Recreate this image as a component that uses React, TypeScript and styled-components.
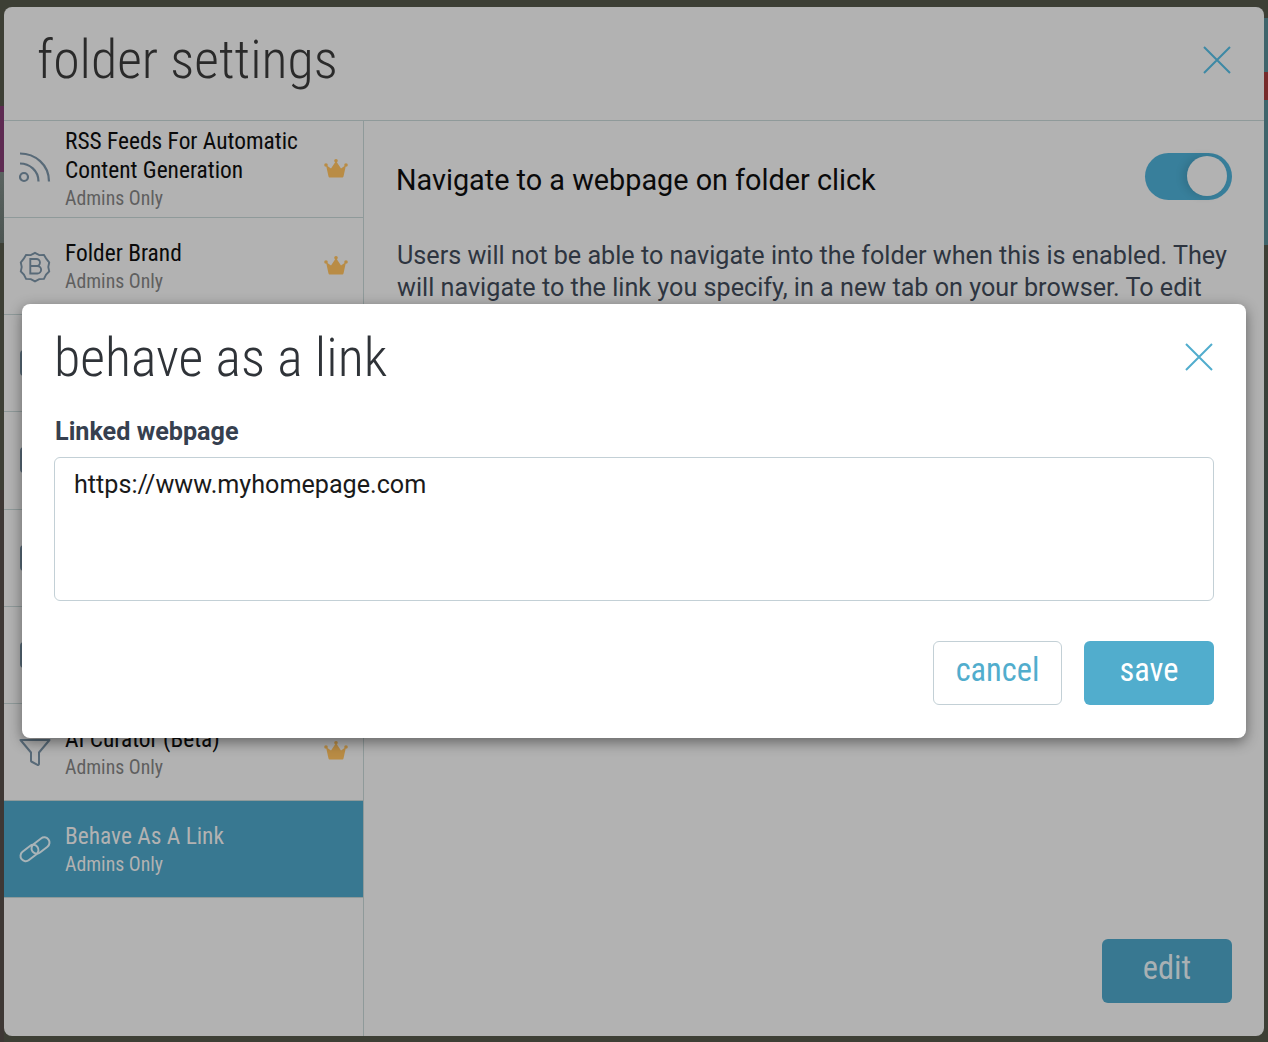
import React from "react";
import styled, { createGlobalStyle } from "styled-components";

const GlobalStyle = createGlobalStyle`
    html, body {
        margin: 0;
        padding: 0;
        background: #3d3f35;
    }
    * {
        box-sizing: border-box;
    }
`;

const condensed = `"Roboto Condensed", Roboto, "Liberation Sans", sans-serif`;

const Page = styled.div`
    position: relative;
    width: 1268px;
    height: 1042px;
    padding: 7px 4px 6px;
    overflow: hidden;
    background:
        linear-gradient(to bottom, #3d3f35 0, #3d3f35 106px, #5e2a52 106px, #5e2a52 172px, #5a6360 172px, #4c5552 243px, #3d3f35 243px, #3d3f35 490px, #3e3835 490px, #3e3835 1042px) left top / 4px 100% no-repeat,
        linear-gradient(to bottom, #3d3f35 0, #3d3f35 18px, #3f646b 18px, #3f646b 72px, #762a2a 72px, #762a2a 100px, #3f646b 100px, #3f646b 245px, #3d3f35 245px, #334340 600px, #3d3f35 1042px) right top / 4px 100% no-repeat,
        #3d3f35;
`;

const Panel = styled.div`
    display: flex;
    flex-direction: column;
    height: 100%;
    background: #b2b2b2;
    border-radius: 8px;
    overflow: hidden;
`;

const Header = styled.header`
    flex: 0 0 114px;
    display: flex;
    align-items: center;
    justify-content: space-between;
    padding: 0 33px 7px 33px;
    border-bottom: 1px solid #8f9a9a;
`;

const Title = styled.h1`
    margin: 0;
    font-family: ${condensed};
    font-stretch: condensed;
    font-weight: 300;
    font-size: 53.8px;
    line-height: 1;
    color: #2a2a2a;
`;

const CloseButton = styled.button<{ $color: string }>`
    width: 28px;
    height: 28px;
    padding: 0;
    border: 0;
    background: none;
    color: ${(p) => p.$color};
    svg {
        display: block;
    }
`;

const Body = styled.div`
    flex: 1;
    display: flex;
    min-height: 0;
`;

const Sidebar = styled.nav`
    flex: 0 0 360px;
    border-right: 1px solid #8f9a9a;
`;

const Row = styled.div<{ $active?: boolean }>`
    height: 97.15px;
    display: flex;
    align-items: center;
    padding: 0 15px;
    border-bottom: 1px solid #8f9a9a;
    background: ${(p) => (p.$active ? "#387891" : "transparent")};
`;

const RowIcon = styled.div<{ $active?: boolean }>`
    flex: 0 0 32px;
    height: 32px;
    margin-right: 14px;
    color: ${(p) => (p.$active ? "#a9b4b8" : "#586a78")};
    svg {
        display: block;
        overflow: visible;
    }
`;

const HiddenIcon = styled.div`
    width: 16px;
    height: 26px;
    margin: 3px 0 0 1px;
    border: 2px solid #586a78;
    border-radius: 4px;
`;

const RowText = styled.div`
    flex: 1;
    min-width: 0;
    padding-top: 2px;
    ${Row}:first-child & {
        padding-top: 0;
    }
`;

const RowTitle = styled.div<{ $active?: boolean }>`
    font-family: ${condensed};
    font-stretch: condensed;
    font-size: 23.4px;
    line-height: 29px;
    color: ${(p) => (p.$active ? "#b2b2b2" : "#0a0a0a")};
`;

const RowSub = styled.div<{ $active?: boolean }>`
    font-family: ${condensed};
    font-stretch: condensed;
    font-size: 19.8px;
    line-height: 27px;
    color: ${(p) => (p.$active ? "#b2b2b2" : "#5f5f5f")};
`;

const Crown = styled.svg`
    flex: 0 0 24px;
    color: #b98c45;
    margin-bottom: 2px;
`;

const Content = styled.main`
    flex: 1;
    display: flex;
    flex-direction: column;
    padding: 31px 32px 33px 33px;
`;

const SettingRow = styled.div`
    display: flex;
    align-items: center;
    justify-content: space-between;
    height: 48px;
    margin-bottom: 40px;
`;

const SettingLabel = styled.div`
    padding-top: 7px;
    margin-left: -1px;
    font-family: Roboto, "Liberation Sans", sans-serif;
    font-size: 28.8px;
    color: #0a0a0a;
`;

const Toggle = styled.div`
    position: relative;
    width: 87px;
    height: 47px;
    border-radius: 24px;
    background: #387f9b;
    &::after {
        content: "";
        position: absolute;
        top: 3px;
        right: 5px;
        width: 40px;
        height: 40px;
        border-radius: 50%;
        background: #b2b2b2;
        box-shadow: -4px 0 8px rgba(0, 0, 0, 0.12);
    }
`;

const Description = styled.p`
    margin: 0;
    font-family: Roboto, "Liberation Sans", sans-serif;
    font-size: 25.18px;
    line-height: 32px;
    color: #2e3540;
`;

const Footer = styled.div`
    margin-top: auto;
    display: flex;
    justify-content: flex-end;
`;

const Button = styled.button<{ $variant: "dim" | "primary" | "outline" }>`
    width: ${(p) => (p.$variant === "outline" ? "129px" : "130px")};
    height: 64px;
    padding: 0 0 7px;
    border-radius: 6px;
    border: ${(p) => (p.$variant === "outline" ? "1px solid #c3d0d6" : "0")};
    font-family: ${condensed};
    font-stretch: condensed;
    font-size: 32.4px;
    background: ${(p) =>
        p.$variant === "dim" ? "#387891" : p.$variant === "primary" ? "#51adcd" : "#fff"};
    color: ${(p) =>
        p.$variant === "dim" ? "#a9b1b4" : p.$variant === "primary" ? "#fff" : "#51adcd"};
`;

const Modal = styled.section`
    position: absolute;
    left: 22px;
    top: 304px;
    width: 1224px;
    height: 434px;
    padding: 0 33px 33px 33px;
    display: flex;
    flex-direction: column;
    background: #fff;
    border-radius: 8px;
    box-shadow: 0 4px 14px rgba(0, 0, 0, 0.45);
`;

const ModalHeader = styled.div`
    height: 106px;
    display: flex;
    align-items: center;
    justify-content: space-between;
`;

const ModalTitle = styled.h2`
    margin: 2px 0 0 -1px;
    font-family: ${condensed};
    font-stretch: condensed;
    font-weight: 300;
    font-size: 54px;
    line-height: 1;
    color: #2f3338;
`;

const FieldLabel = styled.label`
    display: block;
    margin-top: 3px;
    margin-bottom: 6px;
    font-family: Roboto, "Liberation Sans", sans-serif;
    font-weight: 700;
    font-size: 25.2px;
    line-height: 38px;
    color: #36404f;
`;

const UrlField = styled.div`
    height: 144px;
    margin: 0 -1px;
    padding: 9px 19px;
    border: 1px solid #c3d0d6;
    border-radius: 6px;
    font-family: Roboto, "Liberation Sans", sans-serif;
    font-size: 25.15px;
    line-height: 36px;
    color: #1a1a1a;
`;

const Actions = styled.div`
    margin-top: auto;
    margin-right: -1px;
    display: flex;
    justify-content: flex-end;
    gap: 22px;
`;

const CloseIcon = () => (
    <svg width="28" height="28" viewBox="0 0 28 28" fill="none" stroke="currentColor" strokeWidth="2">
        <path d="M1 1l26 26M27 1L1 27" />
    </svg>
);

const RssIcon = () => (
    <svg width="32" height="32" viewBox="0 2 32 32" fill="none" stroke="currentColor" strokeWidth="2.2">
        <circle cx="5" cy="26" r="4" />
        <path d="M1 12.500c9.500 0 18.500 7 18.500 18" />
        <path d="M1 2.500c15 0 29 11 29 28" />
    </svg>
);

const BrandIcon = () => (
    <svg width="32" height="32" viewBox="-1 -1 34 34" fill="none" stroke="currentColor" strokeWidth="2">
        <path d="M16 2l4.500 2.400 5-.2 2.600 4.300 3 3.800-1 4.700 1 4.700-3.300 3.500-2.300 4.500-5 .3-4.500 2.400-4.500-2.400-5-.3-2.300-4.500-3.300-3.500 1-4.700-1-4.700 3-3.800 2.600-4.300 5 .2z" />
        <path d="M11 8.500h6.500a3.700 3.700 0 0 1 0 7.500H11zM11 16h7.500a4 4 0 0 1 0 8H11z" />
    </svg>
);

const FunnelIcon = () => (
    <svg width="32" height="32" viewBox="0 0 32 32" fill="none" stroke="currentColor" strokeWidth="2" strokeLinejoin="round">
        <path d="M1.500 4H30.500L20 16.500V28a1 1 0 0 1-1.500.8L12.300 25.500a1 1 0 0 1-.3-.8V16.500Z" />
    </svg>
);

const LinkIcon = () => (
    <svg width="32" height="32" viewBox="0 0 32 32" fill="none" stroke="currentColor" strokeWidth="2">
        <rect x="0.500" y="14.750" width="20" height="10.500" rx="5.250" transform="rotate(-38 10.500 20)" />
        <rect x="11.500" y="7.250" width="20" height="10.500" rx="5.250" transform="rotate(-38 21.500 12.500)" />
    </svg>
);

const CrownIcon = () => (
    <Crown width="24" height="19" viewBox="0 0 24 19" fill="currentColor">
        <circle cx="2" cy="6" r="1.800" />
        <circle cx="12" cy="1.800" r="1.800" />
        <circle cx="22" cy="6" r="1.800" />
        <path d="M2 6l5 3.500L12 2l5 7.500L22 6l-2.400 11c-.2 1-.8 1.500-1.600 1.500H6c-.8 0-1.400-.5-1.600-1.500z" />
    </Crown>
);

const App = () => {
    return (
        <Page>
            <GlobalStyle />
            <Panel>
                <Header>
                    <Title>folder settings</Title>
                    <CloseButton $color="#3d89a5">
                        <CloseIcon />
                    </CloseButton>
                </Header>
                <Body>
                    <Sidebar>
                        <Row>
                            <RowIcon><RssIcon /></RowIcon>
                            <RowText>
                                <RowTitle>RSS Feeds For Automatic Content Generation</RowTitle>
                                <RowSub>Admins Only</RowSub>
                            </RowText>
                            <CrownIcon />
                        </Row>
                        <Row>
                            <RowIcon><BrandIcon /></RowIcon>
                            <RowText>
                                <RowTitle>Folder Brand</RowTitle>
                                <RowSub>Admins Only</RowSub>
                            </RowText>
                            <CrownIcon />
                        </Row>
                        <Row><RowIcon><HiddenIcon /></RowIcon></Row>
                        <Row><RowIcon><HiddenIcon /></RowIcon></Row>
                        <Row><RowIcon><HiddenIcon /></RowIcon></Row>
                        <Row><RowIcon><HiddenIcon /></RowIcon></Row>
                        <Row>
                            <RowIcon><FunnelIcon /></RowIcon>
                            <RowText>
                                <RowTitle>AI Curator (Beta)</RowTitle>
                                <RowSub>Admins Only</RowSub>
                            </RowText>
                            <CrownIcon />
                        </Row>
                        <Row $active>
                            <RowIcon $active><LinkIcon /></RowIcon>
                            <RowText>
                                <RowTitle $active>Behave As A Link</RowTitle>
                                <RowSub $active>Admins Only</RowSub>
                            </RowText>
                        </Row>
                    </Sidebar>
                    <Content>
                        <SettingRow>
                            <SettingLabel>Navigate to a webpage on folder click</SettingLabel>
                            <Toggle />
                        </SettingRow>
                        <Description>
                            Users will not be able to navigate into the folder when this is enabled. They
                            will navigate to the link you specify, in a new tab on your browser. To edit
                        </Description>
                        <Footer>
                            <Button $variant="dim">edit</Button>
                        </Footer>
                    </Content>
                </Body>
            </Panel>
            <Modal>
                <ModalHeader>
                    <ModalTitle>behave as a link</ModalTitle>
                    <CloseButton $color="#51adcd">
                        <CloseIcon />
                    </CloseButton>
                </ModalHeader>
                <FieldLabel>Linked webpage</FieldLabel>
                <UrlField>https://www.myhomepage.com</UrlField>
                <Actions>
                    <Button $variant="outline">cancel</Button>
                    <Button $variant="primary">save</Button>
                </Actions>
            </Modal>
        </Page>
    );
};

export default App;
